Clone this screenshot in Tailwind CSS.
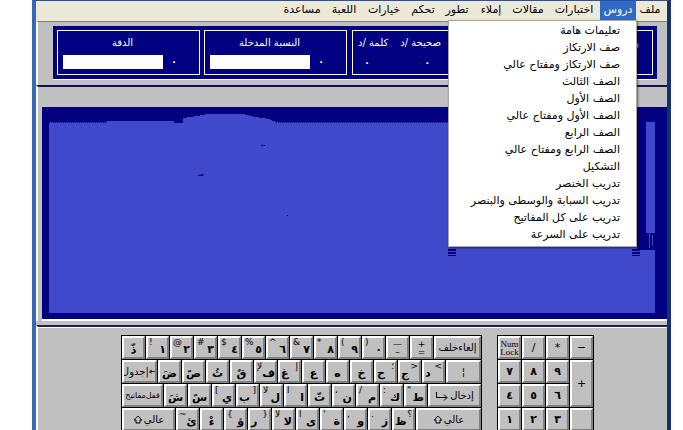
<!DOCTYPE html>
<html lang="ar">
<head>
    <meta charset="UTF-8">
    <meta name="viewport" content="width=device-width, initial-scale=1.0">
    <title>مدرب الطباعة</title>
    <script src="https://cdn.jsdelivr.net/npm/@tailwindcss/browser@4"></script>
</head>
<body class="bg-white text-black font-['DejaVu_Sans','Noto_Sans',sans-serif] text-[10px] leading-4">

    <div class="relative ml-8 mr-3 h-screen overflow-hidden border-t border-x-4 border-t-[#2a50a0] border-l-[#3a68b8] border-r-[#16306e] bg-[#c0c0c0]">

        <!-- Menu bar -->
        <nav dir="rtl" class="flex h-5 bg-[#ece9d8] pr-[3px] text-[11px]">
            <button class="w-7 pb-0.5 whitespace-nowrap">ملف</button>
            <button class="w-9 pb-0.5 whitespace-nowrap bg-[#316ac5] text-white">دروس</button>
            <button class="w-[52px] pb-0.5 whitespace-nowrap">اختبارات</button>
            <button class="w-10 pb-0.5 whitespace-nowrap">مقالات</button>
            <button class="w-[34px] pb-0.5 whitespace-nowrap">إملاء</button>
            <button class="w-[34px] pb-0.5 whitespace-nowrap">تطور</button>
            <button class="w-[34px] pb-0.5 whitespace-nowrap">تحكم</button>
            <button class="w-11 pb-0.5 whitespace-nowrap">خيارات</button>
            <button class="w-9 pb-0.5 whitespace-nowrap">اللعبة</button>
            <button class="w-12 pb-0.5 whitespace-nowrap">مساعدة</button>
        </nav>

        <!-- Open menu -->
        <ul dir="rtl" class="absolute top-[19px] right-[30px] z-10 w-[189px] border border-[#aca899] bg-white pt-0.5 pb-0.5 pr-4 text-[11px] shadow-[1px_1px_2px_rgba(0,0,0,0.5)]">
            <li class="h-[17px]"><button class="whitespace-nowrap">تعليمات هامة</button></li>
            <li class="h-[17px]"><button class="whitespace-nowrap">صف الارتكاز</button></li>
            <li class="h-[17px]"><button class="whitespace-nowrap">صف الارتكاز ومفتاح عالي</button></li>
            <li class="h-[17px]"><button class="whitespace-nowrap">الصف الثالث</button></li>
            <li class="h-[17px]"><button class="whitespace-nowrap">الصف الأول</button></li>
            <li class="h-[17px]"><button class="whitespace-nowrap">الصف الأول ومفتاح عالي</button></li>
            <li class="h-[17px]"><button class="whitespace-nowrap">الصف الرابع</button></li>
            <li class="h-[17px]"><button class="whitespace-nowrap">الصف الرابع ومفتاح عالي</button></li>
            <li class="h-[17px]"><button class="whitespace-nowrap">التشكيل</button></li>
            <li class="h-[17px]"><button class="whitespace-nowrap">تدريب الخنصر</button></li>
            <li class="h-[17px]"><button class="whitespace-nowrap">تدريب السبابة والوسطى والبنصر</button></li>
            <li class="h-[17px]"><button class="whitespace-nowrap">تدريب على كل المفاتيح</button></li>
            <li class="h-[17px]"><button class="whitespace-nowrap">تدريب على السرعة</button></li>
        </ul>

        <!-- Statistics -->
        <section class="border-t border-l-2 border-t-[#808080] border-l-white pt-1 pb-[5px] pl-[15px] pr-[10px]">
            <div class="flex gap-1 border-b border-white bg-[#000080] p-1 text-white">
                <div class="flex h-[45px] w-[143px] flex-col border border-white px-[5px] pt-1">
                    <label for="accuracy" class="pr-3 text-center">الدقة</label>
                    <div class="mt-[3px] flex items-center gap-2">
                        <input id="accuracy" class="h-3.5 w-[100px] bg-white">
                        <span class="font-bold">٠</span>
                    </div>
                </div>
                <div class="flex h-[45px] w-[143px] flex-col border border-white px-[5px] pt-1">
                    <label for="entered" class="pr-3 text-center">النسبة المدخلة</label>
                    <div class="mt-[3px] flex items-center gap-2">
                        <input id="entered" class="h-3.5 w-[100px] bg-white">
                        <span class="font-bold">٠</span>
                    </div>
                </div>
                <div class="ml-px flex h-[45px] flex-1 justify-between border border-white px-[5px] pt-1">
                    <div class="flex gap-3">
                        <div class="flex flex-col gap-1 whitespace-nowrap"><span dir="rtl">كلمة /د</span><span class="pl-1.5 font-bold">٠</span></div>
                        <div class="flex flex-col gap-1 whitespace-nowrap"><span dir="rtl">صحيحة /د</span><span class="pl-6 font-bold">٠</span></div>
                    </div>
                    <span class="pr-2 text-[#a0a0e0]">و</span>
                </div>
            </div>
        </section>

        <!-- Typing area -->
        <main class="border-t-2 border-l-2 border-t-[#101050] border-l-white pt-5 pl-1">
            <div class="border-b-2 border-b-white bg-[#000080] pt-[7px] pr-3 pb-[6px] pl-[7px]">
                <svg class="block h-[199px] w-full" viewBox="0 0 606 199" preserveAspectRatio="none" shape-rendering="crispEdges">
                    <path fill="#4048cc" d="M0 8H58V7H125V9H134V4L148 2L158 0H194L206 3L220 5L227 8H588V120H597V8H606V199H0Z"/>
                    <path fill="#000080" d="M588 8H597V136H588ZM597 119H606V136H597ZM399 135H407V137H399ZM399 138H407V140H399ZM399 141H407V142H399ZM583 135H591V137H583ZM583 138H591V140H583ZM583 141H591V142H583Z"/>
                    <path fill="none" stroke="#4048cc" d="M600 119V134M603 121V132"/>
                    <path fill="none" stroke="#000080" stroke-dasharray="1 1" d="M0 8.500H58M227 8.500H398"/>
                    <path fill="#000080" d="M149 61H152V60H155V61L153 62H149ZM212 31H216V32H212ZM238 101H239V102H238Z"/>
                </svg>
            </div>
        </main>

        <!-- Keyboard -->
        <section class="mt-1 border-t-2 border-l-2 border-t-[#202050] border-l-white">
            <div class="flex gap-[15px] border-t border-white pt-[7px] pl-[83px]">
                <div id="keyboard" class="flex w-[361px] shrink-0 flex-col gap-px bg-black p-px"></div>
                <div id="numpad" class="grid w-[97px] shrink-0 grid-cols-4 grid-rows-[repeat(4,23px)] gap-px bg-black p-px"></div>
            </div>
        </section>
    </div>

    <script>
        // [shift sign, main sign]
        const rows = [
            [['', 'ذّ'], ['!', '١'], ['@', '٢'], ['#', '٣'], ['$', '٤'], ['%', '٥'], ['^', '٦'], ['&', '٧'], ['*', '٨'], ['(', '٩'], [')', '٠'], { text: '—<br>–', width: 'w-[23px]' }, { text: '+<br>=', width: 'w-[23px]' }, { text: 'إلغاءخلف', width: 'flex-1' }],
            [{ text: '←|جدول', width: 'w-[35px]' }, ['', 'ضَ'], ['', 'صً'], ['', 'ثُ'], ['', 'قٌ'], ['لإ', 'ف'], ['إ', 'غ', true], ['', 'ع'], ['', 'ه'], ['', 'خ'], ['؛', 'ح', true], ['>', 'ج', true], ['<', 'د', true], { text: '¦', width: 'flex-1' }],
            [{ text: 'قفل‌مفاتيح', width: 'w-[41px]' }, ['', 'شَ'], ['', 'سً'], ['[', 'ي'], [']', 'ب', true], ['لأ', 'ل'], ['أ', 'ا'], ['', 'تّ'], ['،', 'ن'], ['/', 'م'], [':', 'ك'], ['"', 'ط'], { text: 'إدخال', width: 'flex-1', icon: 'enter' }],
            [{ text: 'عالي', width: 'w-[53px]', icon: 'shift' }, ['~', 'ئ'], ['', 'ءْ'], ['{', 'ؤ'], ['}', 'ر', true], ['لآ', 'لا'], ['آ', 'ى'], ["'", 'ة'], [',', 'و'], ['.', 'ز'], ['؟', 'ظ', true], { text: 'عالي', width: 'flex-1', icon: 'shift' }]
        ];

        const icons = {
            shift: '<svg class="h-2.5 w-2.5" viewBox="0 0 10 10" fill="none" stroke="black"><path d="M5 1L9 5H7V8H3V5H1Z"/></svg>',
            enter: '<svg class="h-2.5 w-3.5" viewBox="0 0 14 10" fill="none" stroke="black"><path d="M1.500 1V6.500H12M9 3.500L12 6.500L9 9.500"/></svg>'
        };

        const keyClass = 'border-2 border-t-white border-l-white border-r-[#808080] border-b-[#808080] bg-[#c0c0c0] overflow-hidden ';

        function makeKey(key) {
            const button = document.createElement('button');
            if (Array.isArray(key)) {
                const [shift, main, mirrored] = key;
                button.className = keyClass + 'flex w-[23px] px-px ' + (shift ? 'justify-between ' : 'justify-center ') + (mirrored ? 'flex-row-reverse' : '');
                button.innerHTML = (shift ? '<span class="text-[9px] leading-2">' + shift + '</span>' : '')
                    + '<span class="pt-1 text-[11px] leading-4 font-bold">' + main + '</span>';
            } else {
                let size = 'text-[10px] leading-4 ';
                if (key.width === 'w-[41px]') size = 'text-[8px] leading-4 ';
                if (key.width === 'w-[23px]') size = 'text-[9px] leading-2 ';
                button.className = keyClass + 'flex items-center justify-center gap-px whitespace-nowrap ' + size + key.width;
                button.innerHTML = (key.icon ? icons[key.icon] : '') + '<span dir="rtl">' + key.text + '</span>';
            }
            return button;
        }

        const keyboard = document.getElementById('keyboard');
        rows.forEach(row => {
            const line = document.createElement('div');
            line.className = 'flex h-[23px] gap-px';
            row.forEach(key => line.appendChild(makeKey(key)));
            keyboard.appendChild(line);
        });

        const numpad = document.getElementById('numpad');
        ['Num Lock', '/', '*', '−', '٧', '٨', '٩', '+', '٤', '٥', '٦', '١', '٢', '٣', ''].forEach(sign => {
            const button = document.createElement('button');
            const digit = sign >= '٠' && sign <= '٩';
            button.className = keyClass + (sign === '+' ? 'row-span-2 ' : '') + (digit ? 'font-bold ' : '')
                + (sign === 'Num Lock' ? "font-['Liberation_Serif',serif] text-[9px] leading-2" : 'text-[11px] leading-4');
            button.textContent = sign;
            numpad.appendChild(button);
        });
    </script>

</body>
</html>
